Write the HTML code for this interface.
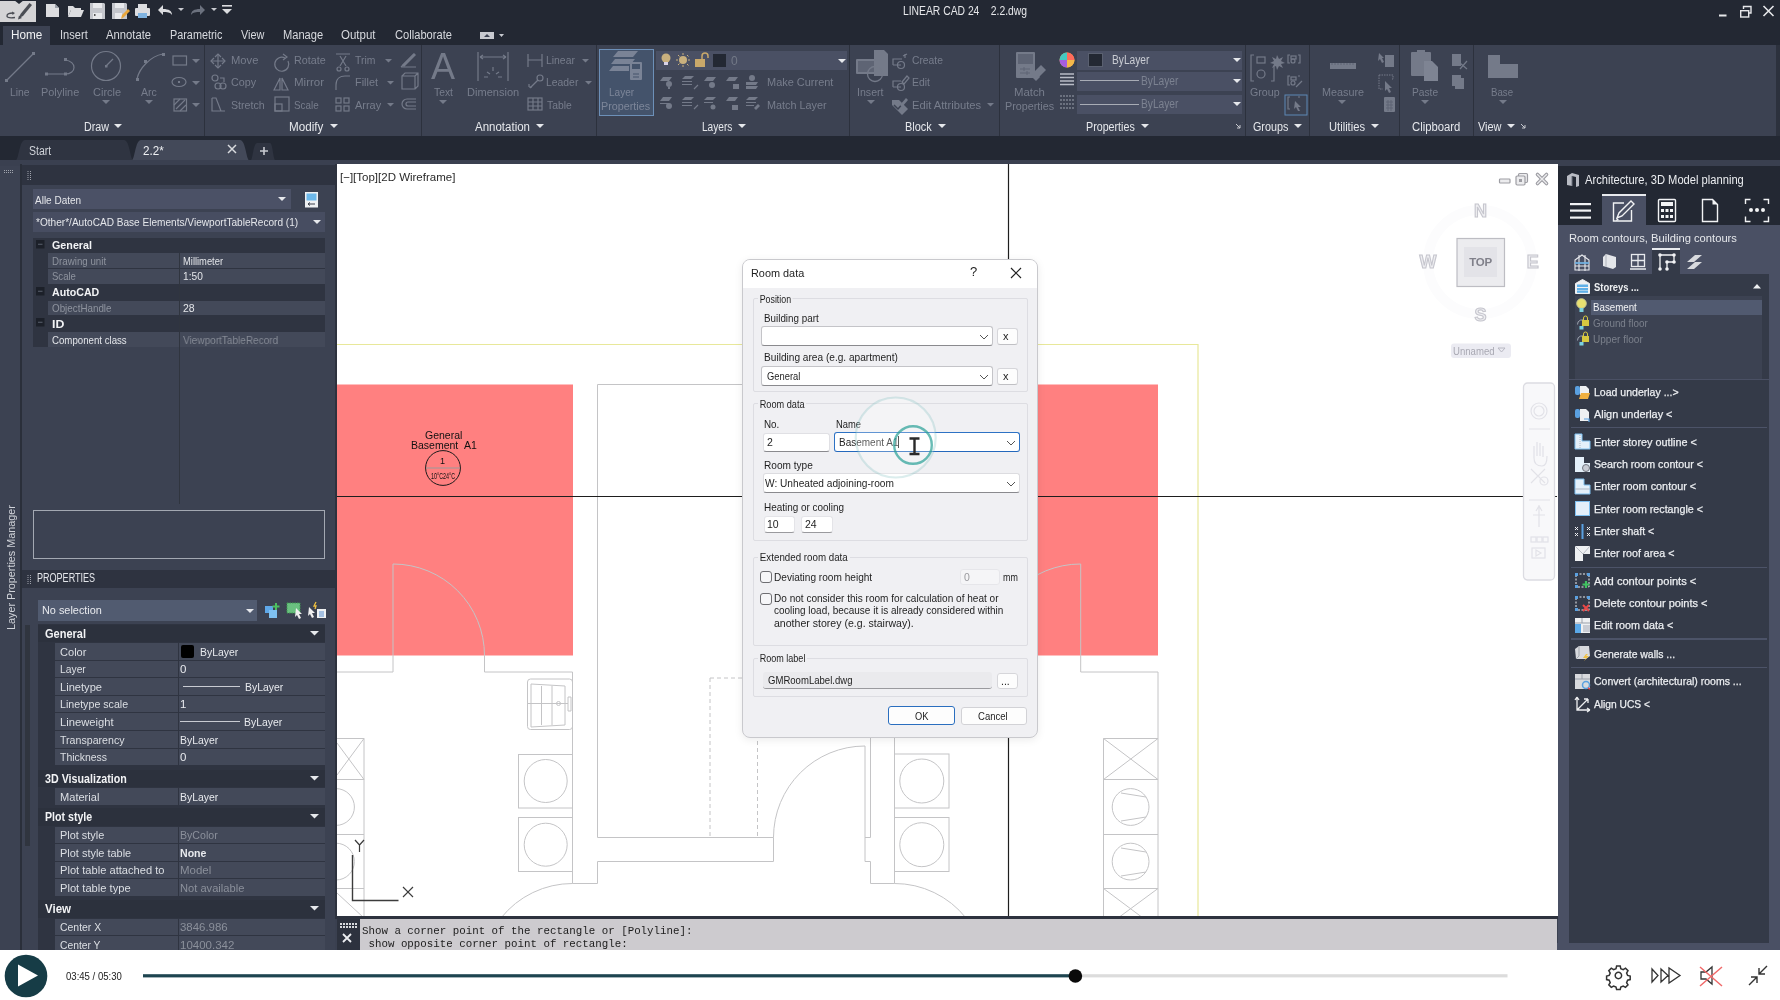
<!DOCTYPE html>
<html><head><meta charset="utf-8">
<style>
*{margin:0;padding:0;box-sizing:border-box}
html,body{width:1780px;height:1000px;overflow:hidden;background:#3a4050;font-family:"Liberation Sans",sans-serif}
.a{position:absolute}
.t{position:absolute;white-space:nowrap;line-height:14px;font-size:12px}
svg{position:absolute;overflow:visible}
#title{left:0;top:0;width:1780px;height:45px;background:#232833}
#ribbon{left:0;top:45px;width:1780px;height:91px;background:#3c4252}
#tabbar{left:0;top:136px;width:1780px;height:28px;background:#232833}
.rb{color:#777d8c}
.rl{color:#e6e8ec;font-size:12px}
.dis{stroke:#737989;fill:none;stroke-width:1.3}
.disf{fill:#737989}
</style></head><body>
<div style="position:absolute;left:0;top:0;width:1780px;height:1000px;overflow:hidden;will-change:transform">
<div id="title" class="a"></div>
<div id="ribbon" class="a"></div>
<div id="tabbar" class="a"></div>
<!-- app button -->
<div class="a" style="left:0;top:1px;width:36px;height:20.5px;background:#d4d4d6"></div>
<svg style="left:0;top:0" width="36" height="22"><path d="M14 0h10l-5 4z" fill="#232833"/>
<path d="M19 18l1.5-4 9-11 2.5 2-9 11z" fill="#4a4d54"/><path d="M18 19.5l1-4 3 2.5z" fill="#4a4d54"/>
<path d="M15 17.5c-4 .5-8 .5-8-1.5 0-2 3-3 6-3" stroke="#4a4d54" stroke-width="1.3" fill="none"/><path d="M12 11.5l3 1.5-2.5 2z" fill="#4a4d54"/></svg>
<!-- quick access icons -->
<svg style="left:45px;top:3px" width="16" height="15"><path d="M1 1h9l4 4v9H1z" fill="#dcdde0"/><path d="M10 1v4h4" fill="#9aa0aa"/></svg>
<svg style="left:67px;top:4px" width="17" height="14"><path d="M1 2h5l2 2h6v2H4L1 13z" fill="#dcdde0"/><path d="M4 6h13l-3 7H1z" fill="#dcdde0"/></svg>
<svg style="left:90px;top:3px" width="16" height="16"><path d="M0 0h14l1 1v15H0z" fill="#c4c6cc"/><rect x="3" y="0" width="9" height="5" fill="#e8e9ec"/><rect x="3" y="10" width="9" height="6" fill="#e8e9ec"/><rect x="4" y="11" width="1.5" height="2" fill="#555"/></svg>
<svg style="left:112px;top:3px" width="17" height="16"><path d="M0 0h14l1 1v15H0z" fill="#c4c6cc"/><rect x="3" y="0" width="9" height="5" fill="#e8e9ec"/><rect x="3" y="10" width="7" height="6" fill="#e8e9ec"/><path d="M9 16l1-4 6-6 2 2-6 6z" fill="#e8a53a"/></svg>
<svg style="left:134px;top:3px" width="17" height="16"><rect x="4" y="1" width="9" height="4" fill="#dcdde0"/><rect x="1" y="5" width="15" height="8" rx="1" fill="#dcdde0"/><rect x="4" y="10" width="9" height="5" fill="#7fb3e0"/></svg>
<svg style="left:157px;top:4px" width="16" height="12"><path d="M6 1L1 6l5 5V8c4 0 7 0 9 3 0-4-3-6-9-6z" fill="#dcdde0"/></svg>
<svg style="left:178px;top:8px" width="6" height="4"><path d="M0 0h6L3 3z" fill="#c8cad0"/></svg>
<svg style="left:190px;top:4px" width="16" height="12"><path d="M10 1l5 5-5 5V8C6 8 3 8 1 11c0-4 3-6 9-6z" fill="#6b717e"/></svg>
<svg style="left:211px;top:8px" width="6" height="4"><path d="M0 0h6L3 3z" fill="#c8cad0"/></svg>
<svg style="left:222px;top:5px" width="10" height="9"><rect x="0" y="0" width="10" height="1.6" fill="#dcdde0"/><path d="M0 4h10L5 9z" fill="#dcdde0"/></svg>
<span class="t" style="transform:scaleX(0.861);transform-origin:0 0;left:903px;top:4px;color:#e6e7ea;font-size:12px">LINEAR CAD 24&nbsp;&nbsp;&nbsp;&nbsp;2.2.dwg</span>
<!-- window controls -->
<svg style="left:1716px;top:5px" width="62" height="14"><rect x="3" y="9.5" width="7.5" height="2" fill="#e6e7ea"/><path d="M27.5 4V1.5h7.5v6.5h-2" stroke="#e6e7ea" stroke-width="1.4" fill="none"/><rect x="24.7" y="5.7" width="8" height="6.3" stroke="#e6e7ea" stroke-width="1.4" fill="none"/><path d="M47.5 1l10 10M57.5 1l-10 10" stroke="#e6e7ea" stroke-width="1.6"/></svg>
<!-- ribbon tabs -->
<div class="a" style="left:3px;top:26px;width:47px;height:19px;background:#3c4252"></div>
<span class="t" style="transform:scaleX(0.939);transform-origin:0 0;left:11px;top:28px;color:#f0f1f3;font-size:12.5px">Home</span>
<span class="t" style="transform:scaleX(0.887);transform-origin:0 0;left:60px;top:28px;color:#d8dadf;font-size:12.5px">Insert</span>
<span class="t" style="transform:scaleX(0.900);transform-origin:0 0;left:106px;top:28px;color:#d8dadf;font-size:12.5px">Annotate</span>
<span class="t" style="transform:scaleX(0.867);transform-origin:0 0;left:170px;top:28px;color:#d8dadf;font-size:12.5px">Parametric</span>
<span class="t" style="transform:scaleX(0.870);transform-origin:0 0;left:241px;top:28px;color:#d8dadf;font-size:12.5px">View</span>
<span class="t" style="transform:scaleX(0.889);transform-origin:0 0;left:283px;top:28px;color:#d8dadf;font-size:12.5px">Manage</span>
<span class="t" style="transform:scaleX(0.921);transform-origin:0 0;left:341px;top:28px;color:#d8dadf;font-size:12.5px">Output</span>
<span class="t" style="transform:scaleX(0.891);transform-origin:0 0;left:395px;top:28px;color:#d8dadf;font-size:12.5px">Collaborate</span>
<svg style="left:480px;top:31px" width="26" height="9"><rect x="0" y="1" width="14" height="7" fill="#c8cad0"/><path d="M4 6h6L7 3z" fill="#3c4252"/><path d="M19 3h5l-2.5 3z" fill="#c8cad0"/></svg>

<!-- separators -->
<div class="a" style="left:204px;top:45px;width:1px;height:91px;background:#2c313d"></div>
<div class="a" style="left:421px;top:45px;width:1px;height:91px;background:#2c313d"></div>
<div class="a" style="left:596px;top:45px;width:1px;height:91px;background:#2c313d"></div>
<div class="a" style="left:849px;top:45px;width:1px;height:91px;background:#2c313d"></div>
<div class="a" style="left:999px;top:45px;width:1px;height:91px;background:#2c313d"></div>
<div class="a" style="left:1245px;top:45px;width:1px;height:91px;background:#2c313d"></div>
<div class="a" style="left:1309px;top:45px;width:1px;height:91px;background:#2c313d"></div>
<div class="a" style="left:1399px;top:45px;width:1px;height:91px;background:#2c313d"></div>
<div class="a" style="left:1473px;top:45px;width:1px;height:91px;background:#2c313d"></div>
<div class="a" style="left:1776px;top:45px;width:4px;height:91px;background:#2c313d"></div>
<!-- panel labels -->
<span class="t rl" style="transform:scaleX(0.893);transform-origin:0 0;left:84px;top:120px">Draw</span>
<span class="t rl" style="transform:scaleX(0.971);transform-origin:0 0;left:289px;top:120px">Modify</span>
<span class="t rl" style="transform:scaleX(0.958);transform-origin:0 0;left:475px;top:120px">Annotation</span>
<span class="t rl" style="transform:scaleX(0.842);transform-origin:0 0;left:702px;top:120px">Layers</span>
<span class="t rl" style="transform:scaleX(0.910);transform-origin:0 0;left:905px;top:120px">Block</span>
<span class="t rl" style="transform:scaleX(0.891);transform-origin:0 0;left:1086px;top:120px">Properties</span>
<span class="t rl" style="transform:scaleX(0.897);transform-origin:0 0;left:1253px;top:120px">Groups</span>
<span class="t rl" style="transform:scaleX(0.931);transform-origin:0 0;left:1329px;top:120px">Utilities</span>
<span class="t rl" style="transform:scaleX(0.941);transform-origin:0 0;left:1412px;top:120px">Clipboard</span>
<span class="t rl" style="transform:scaleX(0.912);transform-origin:0 0;left:1478px;top:120px">View</span>
<svg style="left:0;top:122px" width="1540" height="10">
<g fill="#e6e8ec"><path d="M114 2h8l-4 4z"/><path d="M330 2h8l-4 4z"/><path d="M536 2h8l-4 4z"/><path d="M738 2h8l-4 4z"/><path d="M938 2h8l-4 4z"/><path d="M1141 2h8l-4 4z"/><path d="M1294 2h8l-4 4z"/><path d="M1371 2h8l-4 4z"/><path d="M1507 2h8l-4 4z"/></g>
<path d="M1236 2l4 4M1240 3v3h-3M1521 2l4 4M1525 3v3h-3" stroke="#c8cad0" stroke-width="1" fill="none"/>
</svg>
<!-- DRAW -->
<svg style="left:0;top:45px" width="205" height="75" class="rbsvg">
<g stroke="#747a89" fill="none" stroke-width="1.2">
<path d="M7 35L33 9"/>
<path d="M47 29h18M65 15c12 1 12 14 0 14"/>
<circle cx="106" cy="21" r="14.5"/><path d="M106 21l7-7"/>
<path d="M137 34C139 24 150 11 163 9"/>
<rect x="173" y="11" width="13.5" height="9"/>
<ellipse cx="179" cy="37" rx="7" ry="4.5"/>
<rect x="174" y="54" width="12.5" height="12"/><path d="M176 64l9-9M174 60l6-6M180 66l6-6"/>
</g>
<g fill="#747a89"><rect x="5" y="34" width="3" height="3"/><rect x="32" y="7" width="3" height="3"/><rect x="45" y="27.5" width="3" height="3"/><rect x="64" y="27.5" width="3" height="3"/><rect x="64" y="13" width="3" height="3"/><rect x="105" y="20" width="2.5" height="2.5"/><rect x="136" y="33" width="3" height="3"/><rect x="144" y="15" width="3" height="3"/><rect x="162" y="8" width="3" height="3"/><rect x="178" y="36" width="2" height="2"/>
<path d="M102 55h8l-4 4zM145 55h8l-4 4zM192 14h8l-4 4zM192 36h8l-4 4zM192 58h8l-4 4z"/></g>
</svg>
<span class="t rb" style="transform:scaleX(0.943);transform-origin:0 0;left:10px;top:85px;font-size:11px">Line</span>
<span class="t rb" style="transform:scaleX(0.992);transform-origin:0 0;left:41px;top:85px;font-size:11px">Polyline</span>
<span class="t rb" style="transform:scaleX(1.000);transform-origin:0 0;left:93px;top:85px;font-size:11px">Circle</span>
<span class="t rb" style="transform:scaleX(0.959);transform-origin:0 0;left:141px;top:85px;font-size:11px">Arc</span>
<!-- MODIFY -->
<svg style="left:205px;top:45px" width="216" height="75">
<g stroke="#747a89" fill="none" stroke-width="1.2">
<path d="M13 9v14M6 16h14"/><path d="M10 12l3-3 3 3M10 20l3 3 3-3M9 13l-3 3 3 3M17 13l3 3-3 3"/>
<circle cx="10" cy="33" r="3"/><circle cx="13" cy="41" r="3"/><circle cx="18" cy="41" r="3"/><path d="M15 33h4v4"/>
<path d="M7 53v13h13M7 53h4l5 13"/>
<path d="M80 13a7 7 0 1 0 3 3M78 9l4 3-4 3"/>
<path d="M69 45l6-12v12zM77 45v-12l6 12z"/>
<rect x="70" y="52" width="14" height="14"/><rect x="70" y="59" width="7" height="7"/>
<path d="M131 9h14M135 11l6 10M141 11l-6 10"/><circle cx="134" cy="24" r="2"/><circle cx="142" cy="24" r="2"/>
<path d="M131 45v-5c0-6 4-9 9-9h5"/>
<rect x="131" y="53" width="5" height="5"/><rect x="139" y="53" width="5" height="5"/><rect x="131" y="61" width="5" height="5"/><rect x="139" y="61" width="5" height="5"/>
<path d="M196 22l13-13M196 22h15"/>
<path d="M197 31h13v13h-13zM197 31l3-3h13v13l-3 3M210 31l3-3"/>
<path d="M211 54h-9a5 5 0 0 0 0 10h9M211 57h-8a2 2 0 0 0 0 4h8"/>
</g>
<g fill="#747a89"><path d="M180 14h7l-3.5 3.5zM182 36h7l-3.5 3.5zM182 58h7l-3.5 3.5z"/><path d="M197 20l12-12 2 2-12 12z"/></g>
</svg>
<span class="t rb" style="transform:scaleX(1.019);transform-origin:0 0;left:231px;top:53px;font-size:11px">Move</span>
<span class="t rb" style="transform:scaleX(0.977);transform-origin:0 0;left:231px;top:75px;font-size:11px">Copy</span>
<span class="t rb" style="transform:scaleX(0.969);transform-origin:0 0;left:231px;top:98px;font-size:11px">Stretch</span>
<span class="t rb" style="transform:scaleX(0.978);transform-origin:0 0;left:294px;top:53px;font-size:11px">Rotate</span>
<span class="t rb" style="transform:scaleX(1.048);transform-origin:0 0;left:294px;top:75px;font-size:11px">Mirror</span>
<span class="t rb" style="transform:scaleX(0.896);transform-origin:0 0;left:294px;top:98px;font-size:11px">Scale</span>
<span class="t rb" style="transform:scaleX(0.941);transform-origin:0 0;left:355px;top:53px;font-size:11px">Trim</span>
<span class="t rb" style="transform:scaleX(0.991);transform-origin:0 0;left:355px;top:75px;font-size:11px">Fillet</span>
<span class="t rb" style="transform:scaleX(0.996);transform-origin:0 0;left:355px;top:98px;font-size:11px">Array</span>
<!-- ANNOTATION -->
<span class="t rb" style="left:431px;top:49px;font-size:36px;line-height:36px;color:#747a89">A</span>
<svg style="left:422px;top:45px" width="175" height="75">
<g stroke="#747a89" fill="none" stroke-width="1.2">
<path d="M56 7v29M86 7v29M58 12h26M58 12l3-2M58 12l3 2M84 12l-3-2M84 12l-3 2"/>
<path d="M71 22v4M65 27l3 2M77 27l-3 2M62 32h4M80 32h-4"/>
<path d="M106 9v13M120 9v13M106 15h14"/>
<path d="M108 43l8-8"/><circle cx="118" cy="33" r="3"/><path d="M107 42v-3M107 42h3"/>
<rect x="106" y="53" width="14" height="12"/><path d="M106 57h14M106 61h14M111 53v12M116 53v12"/>
</g>
<g fill="#747a89"><path d="M17 55h8l-4 4z"/><path d="M160 14h7l-3.5 3.5zM163 36h7l-3.5 3.5z"/></g>
</svg>
<span class="t rb" style="transform:scaleX(0.940);transform-origin:0 0;left:434px;top:85px;font-size:11px">Text</span>
<span class="t rb" style="transform:scaleX(1.004);transform-origin:0 0;left:467px;top:85px;font-size:11px">Dimension</span>
<span class="t rb" style="transform:scaleX(0.945);transform-origin:0 0;left:546px;top:53px;font-size:11px">Linear</span>
<span class="t rb" style="transform:scaleX(0.944);transform-origin:0 0;left:546px;top:75px;font-size:11px">Leader</span>
<span class="t rb" style="transform:scaleX(0.938);transform-origin:0 0;left:547px;top:98px;font-size:11px">Table</span>
<!-- LAYERS -->
<div class="a" style="left:599px;top:49px;width:55px;height:67px;background:#44536b;border:1px solid #6d90b8"></div>
<svg style="left:599px;top:45px" width="55" height="40">
<g fill="#7a8396"><path d="M14 12l5-6h20l-5 6z"/><path d="M12 19l4-5h20l-4 5z"/><path d="M10 26l4-5h16v5z"/><rect x="31" y="17" width="12" height="18" rx="1"/></g>
<rect x="33" y="19" width="8" height="5" fill="#44536b"/><path d="M34 29h6M34 32h6" stroke="#44536b" stroke-width="1"/>
</svg>
<span class="t rb" style="transform:scaleX(0.911);transform-origin:0 0;left:609px;top:85px;font-size:11px;color:#7d8699">Layer</span>
<span class="t rb" style="transform:scaleX(0.980);transform-origin:0 0;left:601px;top:99px;font-size:11px;color:#7d8699">Properties</span>
<div class="a" style="left:656px;top:51px;width:191px;height:19px;background:#4a5064"></div>
<svg style="left:656px;top:51px" width="191" height="19">
<circle cx="10" cy="7" r="4.5" fill="#c9b07e"/><rect x="8" y="11" width="4" height="3" fill="#d8d2e8"/>
<circle cx="27" cy="9" r="4" fill="#c9b07e"/><path d="M27 2v2M27 14v2M20 9h2M32 9h2M22 4l1.5 1.5M31 13l1.5 1.5M22 14l1.5-1.5M31 4l1.5 1.5" stroke="#c9b07e" stroke-width="1"/>
<rect x="39" y="8" width="10" height="8" fill="#c9a86a"/><path d="M46 8V5a3 3 0 0 1 6 0v2" stroke="#c9a86a" stroke-width="1.5" fill="none"/>
<rect x="57" y="3" width="13" height="13" fill="#232833"/>
<path d="M182 8h8l-4 4z" fill="#e6e8ec"/>
</svg>
<span class="t" style="left:731px;top:54px;color:#737987;font-size:12px">0</span>
<svg style="left:656px;top:75px" width="110" height="42">
<g fill="#747a89">
<path d="M4 6l3-4h9l-3 4z"/><circle cx="13" cy="9" r="3"/><rect x="12" y="12" width="2" height="2"/>
<path d="M26 4l3-3h9l-3 3zM26 6.5h9M26 9h9" /><path d="M26 6h10v1H26zM26 9h10v1H26z"/>
<path d="M48 6l3-4h9l-3 4z"/><circle cx="56" cy="10" r="3"/>
<path d="M70 6l3-4h9l-3 4z"/><rect x="77" y="9" width="6" height="5"/>
<circle cx="96" cy="3" r="3"/><path d="M90 7h12l-2 3H90zM90 11h12l-2 3H90z"/>
<path d="M4 26l3-4h9l-3 4zM4 28h9v1H4z"/><circle cx="13" cy="31" r="3"/>
<path d="M26 25l3-3h9l-3 3zM26 27h10v1H26zM26 30h10v1H26z"/>
<path d="M48 25l3-3h9l-3 3zM48 27h9v1h-9z"/><circle cx="57" cy="32" r="2.5"/>
<path d="M70 26l3-4h9l-3 4z"/><rect x="76" y="30" width="6" height="5"/>
<path d="M90 25l3-3h9l-3 3zM90 27h10v1H90zM90 30h8v1h-8z"/><path d="M98 33l4-4 2 2-4 4z"/>
</g>
<path d="M38 14l4-4M38 34l4-4" stroke="#747a89" stroke-width="1.2"/>
</svg>
<span class="t rb" style="transform:scaleX(0.996);transform-origin:0 0;left:767px;top:75px;font-size:11px">Make Current</span>
<span class="t rb" style="transform:scaleX(0.984);transform-origin:0 0;left:767px;top:98px;font-size:11px">Match Layer</span>
<!-- BLOCK -->
<svg style="left:850px;top:45px" width="150" height="75">
<path d="M24 5h10l4 4v22H24z" fill="#747a89"/>
<rect x="6" y="14" width="20" height="15" rx="1" fill="#747a89"/>
<rect x="8" y="16" width="16" height="11" fill="#5e6474"/>
<circle cx="25" cy="29" r="7.5" stroke="#747a89" stroke-width="1.3" fill="none"/>
<g stroke="#747a89" fill="none" stroke-width="1.2">
<path d="M43 20v-6h9M43 20h8"/><circle cx="51" cy="20" r="3.5"/><path d="M53 11l4-2M55 9v4"/>
<path d="M43 42v-6h8M43 42h8"/><circle cx="51" cy="42" r="3.5"/><path d="M52 37l5-6 2 2-5 6z"/>
</g>
<path d="M42 55h7l9 9-6 6-10-10z" fill="#747a89"/><path d="M44 60l4 4 7-8" stroke="#3c4252" stroke-width="1.5" fill="none"/><path d="M50 60l6-7 2 2-6 7z" fill="#747a89"/>
<g fill="#747a89"><path d="M17 55h8l-4 4z"/><path d="M137 58h7l-3.5 3.5z"/></g>
</svg>
<span class="t rb" style="transform:scaleX(0.964);transform-origin:0 0;left:857px;top:85px;font-size:11px">Insert</span>
<span class="t rb" style="transform:scaleX(0.936);transform-origin:0 0;left:912px;top:53px;font-size:11px">Create</span>
<span class="t rb" style="transform:scaleX(0.942);transform-origin:0 0;left:912px;top:75px;font-size:11px">Edit</span>
<span class="t rb" style="transform:scaleX(1.018);transform-origin:0 0;left:912px;top:98px;font-size:11px">Edit Attributes</span>
<!-- PROPERTIES -->
<svg style="left:1000px;top:45px" width="245" height="75">
<g fill="#747a89"><rect x="16" y="7" width="19" height="26" rx="1"/><path d="M34 27l7-7 5 5-7 7z"/><path d="M31 31l4-4 5 5-4 4z"/></g>
<rect x="18" y="9" width="15" height="10" fill="#5e6474"/><path d="M20 24h10M20 28h10M24 22v4M27 26v4" stroke="#5e6474" stroke-width="1"/>
<g transform="translate(1067,60)"></g>
<circle cx="67" cy="15" r="7.5" fill="#e0a040"/>
<path d="M67 15V7.5A7.5 7.5 0 0 1 74.5 15z" fill="#ff6b5b"/><path d="M67 15h7.5A7.5 7.5 0 0 1 67 22.5z" fill="#f5b84a"/><path d="M67 15v7.5A7.5 7.5 0 0 1 59.5 15z" fill="#a65ee0"/><path d="M67 15h-7.5A7.5 7.5 0 0 1 67 7.5z" fill="#46c8c0"/>
<path d="M60 29h14M60 32.5h14M60 36h14M60 39.5h14" stroke="#b8bcc6" stroke-width="1.6"/>
<path d="M60 51h14M60 55h14M60 59h14M60 63h14" stroke="#9aa0ac" stroke-width="1.2" stroke-dasharray="2 1"/>
</svg>
<span class="t rb" style="transform:scaleX(1.033);transform-origin:0 0;left:1014px;top:85px;font-size:11px">Match</span>
<span class="t rb" style="transform:scaleX(0.980);transform-origin:0 0;left:1005px;top:99px;font-size:11px">Properties</span>
<div class="a" style="left:1077px;top:51px;width:165px;height:19px;background:#4a5064"></div>
<div class="a" style="left:1077px;top:72px;width:165px;height:19px;background:#4a5064"></div>
<div class="a" style="left:1077px;top:95px;width:165px;height:19px;background:#4a5064"></div>
<div class="a" style="left:1088px;top:53px;width:15px;height:14px;background:#232833;border:1px solid #5a6070"></div>
<span class="t" style="transform:scaleX(0.850);transform-origin:0 0;left:1112px;top:53px;color:#c9ccd3;font-size:12px">ByLayer</span>
<div class="a" style="left:1080px;top:80px;width:59px;height:1px;background:#a8acb5"></div>
<div class="a" style="left:1080px;top:104px;width:59px;height:1px;background:#a8acb5"></div>
<span class="t" style="transform:scaleX(0.850);transform-origin:0 0;left:1141px;top:74px;color:#7c8291;font-size:12px">ByLayer</span>
<span class="t" style="transform:scaleX(0.850);transform-origin:0 0;left:1141px;top:97px;color:#7c8291;font-size:12px">ByLayer</span>
<svg style="left:1232px;top:56px" width="10" height="55"><g fill="#e6e8ec"><path d="M1 2h8l-4 4z"/><path d="M1 23h8l-4 4z"/><path d="M1 46h8l-4 4z"/></g></svg>
<!-- GROUPS -->
<svg style="left:1246px;top:45px" width="63" height="75">
<g stroke="#747a89" fill="none" stroke-width="1.2">
<path d="M8 10H5v26h3M28 22v14h-3"/><rect x="11" y="12" width="8" height="6"/><circle cx="15" cy="29" r="4"/>
<path d="M44 10h-2v8h2M52 10h2v8h-2"/><rect x="45" y="11" width="5" height="3"/><circle cx="47" cy="16" r="2"/>
<path d="M44 31h-2v9h2M52 31h2"/><rect x="45" y="32" width="5" height="3"/><circle cx="47" cy="38" r="2"/><path d="M50 42l6-6"/>
<path d="M44 52h-2v12h2M52 52h2"/>
</g>
<path d="M31 10l2 4 4-2-2 4 4 2-4 1 2 4-4-2-2 4-1-4-4 2 2-4-4-1 4-2-2-4 4 2z" fill="#747a89"/>
<rect x="39" y="50" width="22" height="20" fill="none" stroke="#5d88b5" stroke-width="1"/>
<path d="M49 56l6 6h-3l2 4h-2l-2-4-2 2z" fill="#747a89"/>
</svg>
<span class="t rb" style="transform:scaleX(0.968);transform-origin:0 0;left:1250px;top:85px;font-size:11px">Group</span>
<!-- UTILITIES -->
<svg style="left:1310px;top:45px" width="90" height="75">
<rect x="20" y="18" width="26" height="6" fill="#747a89"/><path d="M22 18v2M25 18v2M28 18v2M31 18v2M34 18v2M37 18v2M40 18v2M43 18v2" stroke="#5e6474"/>
<path d="M28 55h8l-4 4z" fill="#747a89"/>
<g fill="#747a89"><path d="M69 8l5 5h-2l2 4-2 1-2-4-2 2z"/><rect x="75" y="10" width="9" height="12"/>
<path d="M69 30h14v4h-1M69 30v14h4" stroke="#747a89" fill="none" stroke-dasharray="1.5 1"/><path d="M75 36l7 7h-3l2 4-2 1-2-4-2 2z"/>
<rect x="74" y="52" width="11" height="15" rx="1"/></g>
<path d="M76 57h7M76 60h7M76 63h7M78 55v11M81 55v11" stroke="#5e6474"/>
</svg>
<span class="t rb" style="transform:scaleX(0.981);transform-origin:0 0;left:1322px;top:85px;font-size:11px">Measure</span>
<!-- CLIPBOARD -->
<svg style="left:1400px;top:45px" width="73" height="75">
<rect x="11" y="7" width="20" height="24" rx="1" fill="#747a89"/><rect x="17" y="5" width="8" height="4" fill="#747a89"/>
<path d="M24 16h8l6 6v14H24z" fill="#7e8493"/>
<path d="M21 55h8l-4 4z" fill="#747a89"/>
<g fill="#747a89"><rect x="52" y="9" width="9" height="12"/><rect x="55" y="33" width="9" height="11"/><rect x="52" y="30" width="9" height="11"/></g>
<path d="M60 18l7 6M67 16l-7 8" stroke="#747a89" stroke-width="1.2"/>
</svg>
<span class="t rb" style="transform:scaleX(0.929);transform-origin:0 0;left:1412px;top:85px;font-size:11px">Paste</span>
<!-- VIEW -->
<svg style="left:1474px;top:45px" width="60" height="75">
<path d="M14 10h12v9h18v14H14z" fill="#747a89"/>
<path d="M25 55h8l-4 4z" fill="#747a89"/>
</svg>
<span class="t rb" style="transform:scaleX(0.880);transform-origin:0 0;left:1491px;top:85px;font-size:11px">Base</span>

<!-- document tabs -->
<svg style="left:0;top:138px" width="290" height="24">
<path d="M15 23C19 23 19 2 25 2H124C130 2 130 23 134 23z" fill="#2f3441"/>
<path d="M131 23C135 23 135 2 141 2H240C246 2 246 23 250 23z" fill="#434959"/>
<path d="M250 23C253 23 253 5 257 5H270C273 5 273 23 276 23z" fill="#2f3441"/>
<path d="M264 9v8M260 13h8" stroke="#c8cad0" stroke-width="1.6"/>
<path d="M228 7l8 8M236 7l-8 8" stroke="#d8dade" stroke-width="1.5"/>
</svg>
<span class="t" style="transform:scaleX(0.876);transform-origin:0 0;left:29px;top:144px;color:#cfd2d8;font-size:12px">Start</span>
<span class="t" style="transform:scaleX(0.971);transform-origin:0 0;left:143px;top:144px;color:#eef0f3;font-size:12px">2.2*</span>
<!-- left strip -->
<div class="a" style="left:0;top:166px;width:20px;height:784px;background:#3c4252"></div>
<div class="a" style="left:20px;top:164px;width:2px;height:786px;background:#2a2f3a"></div>
<svg style="left:4px;top:170px" width="10" height="5"><path d="M0.5 0v4M2.5 0v4M4.5 0v4M6.5 0v4M8.5 0v4" stroke="#a0a4ad" stroke-width="1" stroke-dasharray="1 1"/></svg>
<span class="t" style="left:-51px;top:561px;width:124px;color:#d0d3d9;font-size:12px;transform:rotate(-90deg);transform-origin:62px 7px;text-align:center;font-size:10.8px">Layer Properties Manager</span>
<!-- left upper panel -->
<div class="a" style="left:22px;top:165px;width:313px;height:405px;background:#3c4252"></div>
<div class="a" style="left:22px;top:165px;width:313px;height:20px;background:#2e3340"></div>
<svg style="left:27px;top:171px" width="5" height="10"><path d="M1 0v10M3.5 0v10" stroke="#a0a4ad" stroke-width="1" stroke-dasharray="1 1"/></svg>
<div class="a" style="left:33px;top:189px;width:258px;height:20px;background:#4b5166"></div>
<span class="t" style="transform:scaleX(0.908);transform-origin:0 0;left:35px;top:193px;color:#e4e6ea;font-size:11px">Alle Daten</span>
<svg style="left:278px;top:197px" width="8" height="5"><path d="M0 0h8L4 4z" fill="#e6e8ec"/></svg>
<svg style="left:305px;top:192px" width="13" height="16"><rect x="0" y="0" width="13" height="15.5" fill="#eef0f2"/><rect x="1.5" y="1.5" width="10" height="7" fill="#6cb8ea"/><path d="M3 12h7M3 12l2-1.5M3 12l2 1.5" stroke="#3a3f4a" stroke-width="1"/></svg>
<div class="a" style="left:33px;top:212px;width:292px;height:20px;background:#474d61"></div>
<span class="t" style="transform:scaleX(0.917);transform-origin:0 0;left:36px;top:215px;color:#e4e6ea;font-size:11px">*Other*/AutoCAD Base Elements/ViewportTableRecord (1)</span>
<svg style="left:313px;top:220px" width="8" height="5"><path d="M0 0h8L4 4z" fill="#e6e8ec"/></svg>
<!-- upper grid -->
<div class="a" style="left:33px;top:238px;width:292px;height:109px;background:#2f3441"></div>
<div class="a" style="left:48px;top:253px;width:277px;height:15px;background:#434959"></div>
<div class="a" style="left:48px;top:269px;width:277px;height:15px;background:#434959"></div>
<div class="a" style="left:48px;top:301px;width:277px;height:14px;background:#434959"></div>
<div class="a" style="left:48px;top:332px;width:277px;height:15px;background:#434959"></div>
<div class="a" style="left:179px;top:253px;width:1px;height:251px;background:#30353f"></div>
<svg style="left:36px;top:240px" width="9" height="92"><g><rect x="0" y="0" width="8.5" height="8.5" fill="#1c2029"/><rect x="0" y="47" width="8.5" height="8.5" fill="#1c2029"/><rect x="0" y="78" width="8.5" height="8.5" fill="#1c2029"/></g><path d="M2 4.25h4.5M2 51.25h4.5M2 82.25h4.5" stroke="#5a606e" stroke-width="1"/></svg>
<span class="t" style="transform:scaleX(0.976);transform-origin:0 0;left:52px;top:238px;color:#f2f3f5;font-size:11px;font-weight:bold">General</span>
<span class="t" style="transform:scaleX(0.885);transform-origin:0 0;left:52px;top:254px;color:#8e939e;font-size:11px">Drawing unit</span>
<span class="t" style="transform:scaleX(0.851);transform-origin:0 0;left:183px;top:254px;color:#e4e6ea;font-size:11px">Millimeter</span>
<span class="t" style="transform:scaleX(0.868);transform-origin:0 0;left:52px;top:269px;color:#8e939e;font-size:11px">Scale</span>
<span class="t" style="transform:scaleX(0.924);transform-origin:0 0;left:183px;top:269px;color:#e4e6ea;font-size:11px">1:50</span>
<span class="t" style="transform:scaleX(0.967);transform-origin:0 0;left:52px;top:285px;color:#f2f3f5;font-size:11px;font-weight:bold">AutoCAD</span>
<span class="t" style="transform:scaleX(0.893);transform-origin:0 0;left:52px;top:301px;color:#8e939e;font-size:11px">ObjectHandle</span>
<span class="t" style="transform:scaleX(0.950);transform-origin:0 0;left:183px;top:301px;color:#e4e6ea;font-size:11px">28</span>
<span class="t" style="transform:scaleX(1.118);transform-origin:0 0;left:52px;top:317px;color:#f2f3f5;font-size:11px;font-weight:bold">ID</span>
<span class="t" style="transform:scaleX(0.879);transform-origin:0 0;left:52px;top:333px;color:#e4e6ea;font-size:11px">Component class</span>
<span class="t" style="transform:scaleX(0.912);transform-origin:0 0;left:183px;top:333px;color:#858a95;font-size:11px">ViewportTableRecord</span>
<div class="a" style="left:33px;top:510px;width:292px;height:49px;border:1px solid #a3a8b2"></div>
<!-- PROPERTIES panel -->
<div class="a" style="left:22px;top:570px;width:313px;height:380px;background:#3c4252"></div>
<div class="a" style="left:22px;top:570px;width:313px;height:18px;background:#2e3340"></div>
<svg style="left:27px;top:575px" width="5" height="10"><path d="M1 0v10M3.5 0v10" stroke="#a0a4ad" stroke-width="1" stroke-dasharray="1 1"/></svg>
<span class="t" style="transform:scaleX(0.753);transform-origin:0 0;left:37px;top:571px;color:#e4e6ea;font-size:12px">PROPERTIES</span>
<div class="a" style="left:38px;top:600px;width:219px;height:21px;background:#515b70"></div>
<span class="t" style="transform:scaleX(0.989);transform-origin:0 0;left:42px;top:603px;color:#e8eaee;font-size:11px">No selection</span>
<svg style="left:246px;top:609px" width="8" height="5"><path d="M0 0h8L4 4z" fill="#e6e8ec"/></svg>
<svg style="left:265px;top:602px" width="62" height="17">
<rect x="0" y="4" width="8" height="7" fill="#5fa8e8"/><rect x="4" y="8" width="8" height="8" fill="#7ec0f0"/><path d="M11 1v7M7.5 4.5h7" stroke="#4cc060" stroke-width="2"/>
<rect x="22" y="1" width="13" height="10" fill="#6ac080" stroke="#3e9a50" stroke-dasharray="1.5 1"/><path d="M31 6l6 6h-3l2 4-2 1-2-4-2 2z" fill="#f0f0f0"/>
<path d="M44 5l6 6h-3l2 4-2 1-2-4-2 2z" fill="#f0f0f0"/><rect x="52" y="7" width="9" height="9" fill="#eef0f2"/><path d="M54 10h5M54 12h5M54 14h5" stroke="#5a8fd0"/><path d="M51 0l-2 4h2l-1 3" stroke="#f0c040" stroke-width="1.3" fill="none"/>
</svg>
<div class="a" style="left:25px;top:625px;width:5px;height:221px;background:#30353f"></div>

<div class="a" style="left:38px;top:624px;width:287px;height:326px;background:#2f3441"></div>
<div class="a" style="left:38px;top:624.5px;width:287px;height:17.5px;background:#2c313d"></div>
<span class="t" style="transform:scaleX(0.916);transform-origin:0 0;left:45px;top:626.5px;color:#f2f3f5;font-size:12px;font-weight:bold">General</span>
<svg style="left:310px;top:630.5px" width="9" height="5"><path d="M0 0h9L4.5 4.5z" fill="#e6e8ec"/></svg>
<div class="a" style="left:55px;top:643.0px;width:123px;height:16.6px;background:#434959"></div>
<div class="a" style="left:179px;top:643.0px;width:146px;height:16.6px;background:#434959"></div>
<span class="t" style="transform:scaleX(0.963);transform-origin:0 0;left:60px;top:644.5px;color:#dcdfe4;font-size:11.5px">Color</span>
<div class="a" style="left:181px;top:645.0px;width:13px;height:13px;background:#000;border-radius:2px"></div>
<span class="t" style="transform:scaleX(0.905);transform-origin:0 0;left:200px;top:644.5px;color:#e8eaee;font-size:11.5px;">ByLayer</span>
<div class="a" style="left:55px;top:660.6px;width:123px;height:16.6px;background:#434959"></div>
<div class="a" style="left:179px;top:660.6px;width:146px;height:16.6px;background:#434959"></div>
<span class="t" style="transform:scaleX(0.897);transform-origin:0 0;left:60px;top:662.1px;color:#dcdfe4;font-size:11.5px">Layer</span>
<span class="t" style="left:180px;top:662.1px;color:#e8eaee;font-size:11.5px;">0</span>
<div class="a" style="left:55px;top:678.2px;width:123px;height:16.6px;background:#434959"></div>
<div class="a" style="left:179px;top:678.2px;width:146px;height:16.6px;background:#434959"></div>
<span class="t" style="transform:scaleX(0.967);transform-origin:0 0;left:60px;top:679.7px;color:#dcdfe4;font-size:11.5px">Linetype</span>
<div class="a" style="left:183px;top:686.2px;width:57px;height:1px;background:#c8cbd2"></div>
<span class="t" style="transform:scaleX(0.905);transform-origin:0 0;left:245px;top:679.7px;color:#e8eaee;font-size:11.5px;">ByLayer</span>
<div class="a" style="left:55px;top:695.8px;width:123px;height:16.6px;background:#434959"></div>
<div class="a" style="left:179px;top:695.8px;width:146px;height:16.6px;background:#434959"></div>
<span class="t" style="transform:scaleX(0.927);transform-origin:0 0;left:60px;top:697.3px;color:#dcdfe4;font-size:11.5px">Linetype scale</span>
<span class="t" style="left:180px;top:697.3px;color:#e8eaee;font-size:11.5px;">1</span>
<div class="a" style="left:55px;top:713.4px;width:123px;height:16.6px;background:#434959"></div>
<div class="a" style="left:179px;top:713.4px;width:146px;height:16.6px;background:#434959"></div>
<span class="t" style="transform:scaleX(0.975);transform-origin:0 0;left:60px;top:714.9px;color:#dcdfe4;font-size:11.5px">Lineweight</span>
<div class="a" style="left:180px;top:721.4px;width:60px;height:1px;background:#c8cbd2"></div>
<span class="t" style="transform:scaleX(0.905);transform-origin:0 0;left:244px;top:714.9px;color:#e8eaee;font-size:11.5px;">ByLayer</span>
<div class="a" style="left:55px;top:731.0px;width:123px;height:16.6px;background:#434959"></div>
<div class="a" style="left:179px;top:731.0px;width:146px;height:16.6px;background:#434959"></div>
<span class="t" style="transform:scaleX(0.923);transform-origin:0 0;left:60px;top:732.5px;color:#dcdfe4;font-size:11.5px">Transparency</span>
<span class="t" style="transform:scaleX(0.905);transform-origin:0 0;left:180px;top:732.5px;color:#e8eaee;font-size:11.5px;">ByLayer</span>
<div class="a" style="left:55px;top:748.6px;width:123px;height:16.6px;background:#434959"></div>
<div class="a" style="left:179px;top:748.6px;width:146px;height:16.6px;background:#434959"></div>
<span class="t" style="transform:scaleX(0.908);transform-origin:0 0;left:60px;top:750.1px;color:#dcdfe4;font-size:11.5px">Thickness</span>
<span class="t" style="left:180px;top:750.1px;color:#e8eaee;font-size:11.5px;">0</span>
<div class="a" style="left:38px;top:769.5px;width:287px;height:17.5px;background:#2c313d"></div>
<span class="t" style="transform:scaleX(0.891);transform-origin:0 0;left:45px;top:771.5px;color:#f2f3f5;font-size:12px;font-weight:bold">3D Visualization</span>
<svg style="left:310px;top:775.5px" width="9" height="5"><path d="M0 0h9L4.5 4.5z" fill="#e6e8ec"/></svg>
<div class="a" style="left:55px;top:788.0px;width:123px;height:16.6px;background:#434959"></div>
<div class="a" style="left:179px;top:788.0px;width:146px;height:16.6px;background:#434959"></div>
<span class="t" style="transform:scaleX(0.963);transform-origin:0 0;left:60px;top:789.5px;color:#dcdfe4;font-size:11.5px">Material</span>
<span class="t" style="transform:scaleX(0.905);transform-origin:0 0;left:180px;top:789.5px;color:#e8eaee;font-size:11.5px;">ByLayer</span>
<div class="a" style="left:38px;top:808.0px;width:287px;height:17.5px;background:#2c313d"></div>
<span class="t" style="transform:scaleX(0.885);transform-origin:0 0;left:45px;top:810.0px;color:#f2f3f5;font-size:12px;font-weight:bold">Plot style</span>
<svg style="left:310px;top:814.0px" width="9" height="5"><path d="M0 0h9L4.5 4.5z" fill="#e6e8ec"/></svg>
<div class="a" style="left:55px;top:826.5px;width:123px;height:16.6px;background:#434959"></div>
<div class="a" style="left:179px;top:826.5px;width:146px;height:16.6px;background:#434959"></div>
<span class="t" style="transform:scaleX(0.947);transform-origin:0 0;left:60px;top:828.0px;color:#dcdfe4;font-size:11.5px">Plot style</span>
<span class="t" style="transform:scaleX(0.922);transform-origin:0 0;left:180px;top:828.0px;color:#8b909b;font-size:11.5px;">ByColor</span>
<div class="a" style="left:55px;top:844.1px;width:123px;height:16.6px;background:#434959"></div>
<div class="a" style="left:179px;top:844.1px;width:146px;height:16.6px;background:#434959"></div>
<span class="t" style="transform:scaleX(0.952);transform-origin:0 0;left:60px;top:845.6px;color:#dcdfe4;font-size:11.5px">Plot style table</span>
<span class="t" style="transform:scaleX(0.921);transform-origin:0 0;left:180px;top:845.6px;color:#e8eaee;font-size:11.5px;font-weight:bold;">None</span>
<div class="a" style="left:55px;top:861.7px;width:123px;height:16.6px;background:#434959"></div>
<div class="a" style="left:179px;top:861.7px;width:146px;height:16.6px;background:#434959"></div>
<span class="t" style="transform:scaleX(0.967);transform-origin:0 0;left:60px;top:863.2px;color:#dcdfe4;font-size:11.5px">Plot table attached to</span>
<span class="t" style="transform:scaleX(0.997);transform-origin:0 0;left:180px;top:863.2px;color:#8b909b;font-size:11.5px;">Model</span>
<div class="a" style="left:55px;top:879.3px;width:123px;height:16.6px;background:#434959"></div>
<div class="a" style="left:179px;top:879.3px;width:146px;height:16.6px;background:#434959"></div>
<span class="t" style="transform:scaleX(0.970);transform-origin:0 0;left:60px;top:880.8px;color:#dcdfe4;font-size:11.5px">Plot table type</span>
<span class="t" style="transform:scaleX(0.968);transform-origin:0 0;left:180px;top:880.8px;color:#8b909b;font-size:11.5px;">Not available</span>
<div class="a" style="left:38px;top:900.0px;width:287px;height:17.5px;background:#2c313d"></div>
<span class="t" style="transform:scaleX(0.959);transform-origin:0 0;left:45px;top:902.0px;color:#f2f3f5;font-size:12px;font-weight:bold">View</span>
<svg style="left:310px;top:906.0px" width="9" height="5"><path d="M0 0h9L4.5 4.5z" fill="#e6e8ec"/></svg>
<div class="a" style="left:55px;top:918.5px;width:123px;height:16.6px;background:#434959"></div>
<div class="a" style="left:179px;top:918.5px;width:146px;height:16.6px;background:#434959"></div>
<span class="t" style="transform:scaleX(0.907);transform-origin:0 0;left:60px;top:920.0px;color:#dcdfe4;font-size:11.5px">Center X</span>
<span class="t" style="transform:scaleX(0.994);transform-origin:0 0;left:180px;top:920.0px;color:#8b909b;font-size:11.5px;">3846.986</span>
<div class="a" style="left:55px;top:936.1px;width:123px;height:16.6px;background:#434959"></div>
<div class="a" style="left:179px;top:936.1px;width:146px;height:16.6px;background:#434959"></div>
<span class="t" style="transform:scaleX(0.896);transform-origin:0 0;left:60px;top:937.6px;color:#dcdfe4;font-size:11.5px">Center Y</span>
<span class="t" style="transform:scaleX(1.000);transform-origin:0 0;left:180px;top:937.6px;color:#8b909b;font-size:11.5px;">10400.342</span>

<!-- drawing area -->
<div class="a" style="left:335px;top:163px;width:1223px;height:755px;background:#fff;overflow:hidden"></div>
<svg style="left:0;top:0" width="1780" height="1000">
<defs><clipPath id="dc"><rect x="337" y="164" width="1221" height="752"/></clipPath></defs><g clip-path="url(#dc)">
<g>
<rect x="337" y="384.5" width="236" height="271" fill="#ff8080"/>
<rect x="1037" y="384.5" width="121" height="271" fill="#ff8080"/>
</g>
<g stroke="#e8e89a" stroke-width="1.2" fill="none"><path d="M337 344.5H1198V918"/></g>
<g stroke="#c4c4c6" stroke-width="1" fill="none">
<path d="M597.5 384.5H1037M597.5 384.5V837.5H773.5V861.5H597.5V883.5H572.5V672H484.5V655.5"/>
<path d="M393 655.5V564A91.5 91.5 0 0 1 484.5 655.5"/>
<path d="M337 672H393V655.5"/>
<path d="M710 678H743M710 678V837.5M757.5 678V837.5" stroke-dasharray="4 3"/>
<path d="M773.5 837.5A91.5 91.5 0 0 1 865 746V861.5H870.5V883.5H894.5V737M870.5 737V837.5H865"/>
<path d="M894.5 883.5A91.5 91.5 0 0 1 966 918"/>
<path d="M572.5 883.5A91.5 91.5 0 0 0 501 918"/>
<rect x="894.5" y="754" width="54.5" height="54"/><rect x="894.5" y="817.5" width="54.5" height="54"/>
<circle cx="921.8" cy="781" r="22"/><circle cx="921.8" cy="844.7" r="22"/>
<rect x="518.5" y="754.5" width="54" height="53.5"/><rect x="518.5" y="817.5" width="54" height="54"/>
<circle cx="545.7" cy="781" r="21.5"/><circle cx="545.7" cy="844.7" r="21.5"/>
<rect x="527.5" y="679" width="45" height="50.5" rx="3"/>
<path d="M531 684l34 2v39l-34 2z"/><path d="M527.5 703.5H568M541.5 686v39M552 686v39"/><circle cx="558.5" cy="703.5" r="2"/><path d="M568 697v14h3v-14z"/>
<path d="M1080.7 655.5V564A91.5 91.5 0 0 0 989 655.5"/>
<path d="M1080.7 655.5V672H1158V918M1103.5 738.5V918M1103.5 738.5H1158M1103.5 779.5H1158M1103.5 834.5H1158M1103.5 888.5H1158M1103.5 738.5L1158 779.5M1158 738.5L1103.5 779.5M1103.5 888.5L1143 918M1158 888.5L1118 918"/>
<circle cx="1130.6" cy="807" r="18.4"/><circle cx="1130.6" cy="861.6" r="18.4"/>
<path d="M1121 793l25 4M1121 821l25-4M1121 848l25 4M1121 876l25-4"/>
<path d="M337 738.5H364V918M337 779.5H364M337 834.5H364M337 888.5H364M337 743L364 779.5M337 775L364 738.5M337 893L364 918"/>
<circle cx="336" cy="807" r="18.4"/><circle cx="336" cy="861.6" r="18.4"/>
</g>
<g stroke="#1e1e1e" stroke-width="1.2" fill="none"><path d="M337 496.5H1557M1008.5 163V918"/></g>
<g stroke="#1a1a1a" stroke-width="1" fill="none"><circle cx="443" cy="468" r="17.4"/></g>
<path d="M426 468H460" stroke="#9a9a9a" stroke-width="1"/>
</g>
<g stroke="#3c3c3c" stroke-width="1.4" fill="none"><path d="M352.5 855V900.5H398.5"/><path d="M355 840l4.5 5 4.5-5M359.5 845v7M403 887l10 10M413 887l-10 10" stroke-width="1.2"/></g>
</svg>
<span class="t" style="transform:scaleX(1.000);transform-origin:0 0;left:425px;top:429px;color:#111;font-size:10.5px;line-height:12px">General</span>
<span class="t" style="transform:scaleX(1.000);transform-origin:0 0;left:411px;top:439px;color:#111;font-size:10.5px;line-height:12px">Basement&nbsp;&nbsp;A1</span>
<span class="t" style="left:440px;top:456px;color:#111;font-size:9px;line-height:10px">1</span>
<span class="t" style="transform:scaleX(0.600);transform-origin:0 0;left:431px;top:471px;color:#111;font-size:9px;line-height:10px">10°C24°C</span>
<span class="t" style="transform:scaleX(1.000);transform-origin:0 0;left:340px;top:170px;color:#2a2a2a;font-size:11.5px">[−][Top][2D Wireframe]</span>
<!-- viewport controls -->
<svg style="left:1497px;top:171px" width="52" height="15">
<rect x="2.5" y="8" width="10.5" height="4" rx="0.8" fill="#ececee" stroke="#9d9da3" stroke-width="1.2"/>
<rect x="21.5" y="2.5" width="9" height="9" rx="1.2" fill="#ececee" stroke="#9d9da3" stroke-width="1.2"/>
<rect x="19" y="5" width="9" height="9" rx="1.2" fill="#ececee" stroke="#9d9da3" stroke-width="1.2"/>
<rect x="22" y="8" width="3" height="3" fill="#9d9da3"/>
<path d="M40.5 3.5l9 9M49.5 3.5l-9 9" stroke="#9d9da3" stroke-width="3.6" stroke-linecap="round"/>
<path d="M40.5 3.5l9 9M49.5 3.5l-9 9" stroke="#ececee" stroke-width="1.4" stroke-linecap="round"/>
</svg>
<!-- view cube -->
<svg style="left:1400px;top:195px" width="150" height="170">
<circle cx="80" cy="67" r="52" fill="none" stroke="#fcfcfd" stroke-width="10"/>
<rect x="57" y="43.5" width="47.5" height="48" fill="#ececef" stroke="#bdbdc3" stroke-width="1.2"/>
<rect x="64" y="52" width="33" height="30" fill="#e3e3e8"/>
<rect x="51" y="148.5" width="60" height="14.5" rx="3" fill="#ebebf2"/>
<path d="M98 153h7l-3.5 4z" fill="none" stroke="#b8b8c2" stroke-width="1"/>
</svg>
<span class="t" style="left:1480.5px;top:255px;width:0;color:#80808a;font-size:11.5px;font-weight:bold;letter-spacing:-0.3px"><span style="position:absolute;left:-12px;width:24px;text-align:center">TOP</span></span>
<span class="t" style="left:1480.5px;top:202px;width:0;font-size:18px;line-height:18px;font-weight:bold"><span style="position:absolute;left:-15px;width:30px;text-align:center;color:#eeeef1;-webkit-text-stroke:1.1px #c6c6ce">N</span></span>
<span class="t" style="left:1428px;top:253px;width:0;font-size:18px;line-height:18px;font-weight:bold"><span style="position:absolute;left:-15px;width:30px;text-align:center;color:#eeeef1;-webkit-text-stroke:1.1px #c6c6ce">W</span></span>
<span class="t" style="left:1532.8px;top:253px;width:0;font-size:18px;line-height:18px;font-weight:bold"><span style="position:absolute;left:-15px;width:30px;text-align:center;color:#eeeef1;-webkit-text-stroke:1.1px #c6c6ce">E</span></span>
<span class="t" style="left:1480.5px;top:306px;width:0;font-size:18px;line-height:18px;font-weight:bold"><span style="position:absolute;left:-15px;width:30px;text-align:center;color:#eeeef1;-webkit-text-stroke:1.1px #c6c6ce">S</span></span>
<span class="t" style="transform:scaleX(0.913);transform-origin:0 0;left:1453px;top:344px;color:#a8a8b2;font-size:10.5px">Unnamed</span>
<!-- nav bar -->
<svg style="left:1522px;top:382px" width="34" height="200">
<rect x="1.5" y="1" width="31" height="197" rx="4" fill="#f8f8fa" stroke="#dcdce2" stroke-width="1.3"/>
<g stroke="#e2e2e8" stroke-width="1.2" fill="none">
<circle cx="17" cy="29" r="8"/><circle cx="17" cy="29" r="5"/>
<path d="M7 47H28M7 118H28"/>
<path d="M12 76v-12M15 74v-14M18 74v-13M21 75v-11M12 76c0 6 4 8 8 8s5-4 5-10"/>
<path d="M9 87l14 14M23 87l-14 14"/><circle cx="22" cy="99" r="4"/>
<path d="M17 123v22M11 133h12M14 129l3-5 3 5"/>
<rect x="9" y="155" width="5" height="5"/><rect x="15" y="155" width="5" height="5"/><rect x="21" y="155" width="5" height="5"/>
<rect x="10" y="166" width="13" height="10"/><path d="M14 168l5 3-5 3z"/>
</g>
</svg>

<!-- dialog -->
<div class="a" style="left:742px;top:259px;width:295.5px;height:478.5px;background:#f0f0f3;border:1px solid #c9c9cd;border-radius:8px;box-shadow:0 2px 8px rgba(0,0,0,0.08);overflow:hidden">
 <div class="a" style="left:0;top:0;width:294px;height:28px;background:#ffffff"></div>
</div>
<span class="t" style="transform:scaleX(0.946);transform-origin:0 0;left:751px;top:266px;color:#1e1e1e;font-size:11.5px">Room data</span>
<span class="t" style="left:970px;top:265px;color:#222;font-size:13px">?</span>
<svg style="left:1010px;top:267px" width="12" height="12"><path d="M1 1l10 10M11 1L1 11" stroke="#222" stroke-width="1.2"/></svg>
<!-- group boxes -->
<div class="a" style="left:753px;top:298px;width:275px;height:93.5px;border:1px solid #dddde2;border-radius:2px"></div>
<div class="a" style="left:753px;top:403px;width:275px;height:138px;border:1px solid #dddde2;border-radius:2px"></div>
<div class="a" style="left:753px;top:556.5px;width:275px;height:89px;border:1px solid #dddde2;border-radius:2px"></div>
<div class="a" style="left:753px;top:657.5px;width:275px;height:39px;border:1px solid #dddde2;border-radius:2px"></div>
<span class="t" style="transform:scaleX(0.841);transform-origin:0 0;left:758px;top:292px;padding:0 2px;background:#f0f0f3;color:#1e1e1e;font-size:10.5px">Position</span>
<span class="t" style="transform:scaleX(0.873);transform-origin:0 0;left:758px;top:397px;padding:0 2px;background:#f0f0f3;color:#1e1e1e;font-size:10.5px">Room data</span>
<span class="t" style="transform:scaleX(0.929);transform-origin:0 0;left:758px;top:550px;padding:0 2px;background:#f0f0f3;color:#1e1e1e;font-size:10.5px">Extended room data</span>
<span class="t" style="transform:scaleX(0.860);transform-origin:0 0;left:758px;top:651px;padding:0 2px;background:#f0f0f3;color:#1e1e1e;font-size:10.5px">Room label</span>
<span class="t" style="transform:scaleX(0.936);transform-origin:0 0;left:764px;top:311px;color:#1e1e1e;font-size:10.5px">Building part</span>
<span class="t" style="transform:scaleX(0.964);transform-origin:0 0;left:764px;top:350px;color:#1e1e1e;font-size:10.5px">Building area (e.g. apartment)</span>
<!-- combos -->
<div class="a" style="left:761px;top:326px;width:231.5px;height:19.5px;background:#fff;border:1px solid #c4c4c8;border-bottom:1.5px solid #8a8a8e;border-radius:3px"></div>
<div class="a" style="left:761px;top:366px;width:231.5px;height:19.5px;background:#fff;border:1px solid #c4c4c8;border-bottom:1.5px solid #8a8a8e;border-radius:3px"></div>
<span class="t" style="transform:scaleX(0.892);transform-origin:0 0;left:767px;top:369px;color:#1e1e1e;font-size:10.5px">General</span>
<div class="a" style="left:997px;top:327.5px;width:20.5px;height:17px;background:#fdfdfd;border:1px solid #d6d6da;border-bottom-color:#c0c0c4;border-radius:3px"></div>
<div class="a" style="left:997px;top:367.5px;width:20.5px;height:17px;background:#fdfdfd;border:1px solid #d6d6da;border-bottom-color:#c0c0c4;border-radius:3px"></div>
<span class="t" style="left:1003px;top:329px;color:#222;font-size:11px">x</span>
<span class="t" style="left:1003px;top:369px;color:#222;font-size:11px">x</span>
<span class="t" style="transform:scaleX(0.938);transform-origin:0 0;left:764px;top:417px;color:#1e1e1e;font-size:10.5px">No.</span>
<span class="t" style="transform:scaleX(0.893);transform-origin:0 0;left:836px;top:417px;color:#1e1e1e;font-size:10.5px">Name</span>
<div class="a" style="left:762.5px;top:433px;width:67px;height:18.5px;background:#fff;border:1px solid #e0e0e4;border-bottom:1.5px solid #8a8a8e;border-radius:3px"></div>
<span class="t" style="left:767px;top:435px;color:#1e1e1e;font-size:10.5px">2</span>
<div class="a" style="left:834px;top:432px;width:185.5px;height:20px;background:#fff;border:1px solid #2d72c4;border-bottom:1.6px solid #2468bc;border-radius:3px"></div>
<span class="t" style="transform:scaleX(0.952);transform-origin:0 0;left:839px;top:435px;color:#1e1e1e;font-size:10.5px">Basement A1</span>
<div class="a" style="left:898px;top:436px;width:1px;height:12px;background:#222"></div>
<span class="t" style="transform:scaleX(0.961);transform-origin:0 0;left:764px;top:458px;color:#1e1e1e;font-size:10.5px">Room type</span>
<div class="a" style="left:762.5px;top:473px;width:257px;height:19.5px;background:#fff;border:1px solid #dcdce0;border-bottom:1.5px solid #8a8a8e;border-radius:3px"></div>
<span class="t" style="transform:scaleX(0.966);transform-origin:0 0;left:764.5px;top:476px;color:#1e1e1e;font-size:10.5px">W: Unheated adjoining-room</span>
<svg style="left:978px;top:333px" width="42" height="154"><g stroke="#555" stroke-width="1" fill="none"><path d="M2 2l4 4 4-4M2 42l4 4 4-4M29 108l4 4 4-4M29 149l4 4 4-4"/></g></svg>
<span class="t" style="transform:scaleX(0.946);transform-origin:0 0;left:764px;top:500px;color:#1e1e1e;font-size:10.5px">Heating or cooling</span>
<div class="a" style="left:763.5px;top:516px;width:31.5px;height:17px;background:#fff;border:1px solid #e4e4e8;border-bottom:1.5px solid #9a9a9e;border-radius:3px"></div>
<div class="a" style="left:801px;top:516px;width:32px;height:17px;background:#fff;border:1px solid #e4e4e8;border-bottom:1.5px solid #9a9a9e;border-radius:3px"></div>
<span class="t" style="left:767px;top:517px;color:#1e1e1e;font-size:10.5px">10</span>
<span class="t" style="left:805px;top:517px;color:#1e1e1e;font-size:10.5px">24</span>
<!-- checkboxes -->
<div class="a" style="left:760px;top:571px;width:12px;height:12px;background:#f6f6f8;border:1px solid #6e6e72;border-radius:3px"></div>
<div class="a" style="left:760px;top:593px;width:12px;height:12px;background:#f6f6f8;border:1px solid #6e6e72;border-radius:3px"></div>
<span class="t" style="transform:scaleX(0.961);transform-origin:0 0;left:774px;top:570px;color:#1e1e1e;font-size:10.5px">Deviating room height</span>
<div class="a" style="left:960px;top:569px;width:39.5px;height:16px;background:#f5f5f7;border:1px solid #e6e6ea;border-radius:3px"></div>
<span class="t" style="left:964px;top:570px;color:#9a9a9e;font-size:10.5px">0</span>
<span class="t" style="transform:scaleX(0.850);transform-origin:0 0;left:1003px;top:570px;color:#1e1e1e;font-size:10.5px">mm</span>
<span class="t" style="transform:scaleX(0.957);transform-origin:0 0;left:774px;top:591px;color:#1e1e1e;font-size:10.5px">Do not consider this room for calculation of heat or</span>
<span class="t" style="transform:scaleX(0.949);transform-origin:0 0;left:774px;top:603px;color:#1e1e1e;font-size:10.5px">cooling load, because it is already considered within</span>
<span class="t" style="transform:scaleX(1.006);transform-origin:0 0;left:774px;top:615.5px;color:#1e1e1e;font-size:10.5px">another storey (e.g. stairway).</span>
<div class="a" style="left:763px;top:671.5px;width:228.5px;height:17.5px;background:#eaeaed;border-bottom:1.5px solid #9a9a9e;border-radius:3px"></div>
<span class="t" style="transform:scaleX(0.910);transform-origin:0 0;left:767.5px;top:673px;color:#1e1e1e;font-size:10.5px">GMRoomLabel.dwg</span>
<div class="a" style="left:996.5px;top:672.5px;width:21.5px;height:16.5px;background:#fdfdfd;border:1px solid #d6d6da;border-radius:3px"></div>
<span class="t" style="left:1001px;top:674px;color:#222;font-size:10.5px">...</span>
<!-- buttons -->
<div class="a" style="left:888px;top:706px;width:67px;height:19px;background:#fdfdfd;border:1.5px solid #2a6ebf;border-radius:3px"></div>
<div class="a" style="left:961px;top:706.5px;width:66px;height:18.5px;background:#fdfdfd;border:1px solid #d2d2d6;border-radius:3px"></div>
<span class="t" style="transform:scaleX(0.887);transform-origin:0 0;left:914.5px;top:709px;color:#1e1e1e;font-size:10.5px">OK</span>
<span class="t" style="transform:scaleX(0.909);transform-origin:0 0;left:978px;top:709px;color:#1e1e1e;font-size:10.5px">Cancel</span>
<!-- click ripple & cursor -->
<svg style="left:850px;top:392px" width="100" height="100">
<circle cx="45.7" cy="45.5" r="40" fill="rgba(255,255,255,0.25)" stroke="rgba(110,185,185,0.25)" stroke-width="2.2"/>
<circle cx="63" cy="53" r="18.8" fill="none" stroke="rgba(40,160,150,0.7)" stroke-width="2.4"/>
<path d="M59.5 46.5h10M59.5 62h10M64.5 46.5v15.5" stroke="#2a2a2a" stroke-width="2.4"/>
</svg>

<!-- right panel -->
<div class="a" style="left:1558px;top:160px;width:222px;height:790px;background:#4a5064"></div>
<div class="a" style="left:1558px;top:160px;width:222px;height:6px;background:#3a4050"></div>
<div class="a" style="left:1558px;top:166px;width:222px;height:59px;background:#232833"></div>
<svg style="left:1566px;top:172px" width="14" height="15"><path d="M1 4l5-3 7 2v11l-3 1V5L6 4v10l-5-1z" fill="#b9bcc4"/><path d="M6 4v10" stroke="#6f7480" stroke-width="1"/></svg>
<span class="t" style="transform:scaleX(0.930);transform-origin:0 0;left:1584.6px;top:173px;color:#eceef1;font-size:12px">Architecture, 3D Model planning</span>
<div class="a" style="left:1602px;top:194px;width:44px;height:31px;background:#4a5064"></div>
<div class="a" style="left:1602px;top:194px;width:44px;height:2px;background:#e8eaee"></div>
<svg style="left:1568px;top:198px" width="205" height="26">
<g fill="#f2f3f5"><rect x="2" y="5" width="21" height="2.2"/><rect x="2" y="11.5" width="21" height="2.2"/><rect x="2" y="18.5" width="21" height="2.2"/></g>
<g stroke="#f2f3f5" stroke-width="1.4" fill="none">
<path d="M56 5h-10.5v18h18V12"/><path d="M49 20l2-5 12-12 3 3-12 12z"/>
<rect x="90.5" y="1.5" width="17" height="22" rx="1"/>
<path d="M134.5 1.5h10l5 5v17h-15z"/>
<path d="M177.5 6V1.5h5M195.5 1.5h5V6M177.5 18.5v5h5M195.5 23.5h5v-5"/>
</g>
<g fill="#f2f3f5"><rect x="93" y="4" width="12" height="4"/><rect x="93" y="11" width="3" height="3"/><rect x="97.5" y="11" width="3" height="3"/><rect x="102" y="11" width="3" height="3"/><rect x="93" y="17" width="3" height="3"/><rect x="97.5" y="17" width="3" height="3"/><rect x="102" y="17" width="3" height="3"/>
<path d="M144.5 1.5v5h5z"/><circle cx="183" cy="12" r="2"/><circle cx="189" cy="12" r="2"/><circle cx="195" cy="12" r="2"/><path d="M49 20l-1 3 3-1z"/></g>
</svg>
<span class="t" style="transform:scaleX(0.973);transform-origin:0 0;left:1568.7px;top:231px;color:#e6e8ec;font-size:11.5px">Room contours, Building contours</span>
<div class="a" style="left:1652px;top:248px;width:28px;height:26px;background:#343a48"></div>
<div class="a" style="left:1652px;top:248px;width:28px;height:2px;background:#e8eaee"></div>
<svg style="left:1572px;top:252px" width="135" height="20">
<g stroke="#e8eaee" stroke-width="1.1" fill="none"><path d="M3 8l7-5 7 5v10H3z"/><path d="M3 11h14M3 14h14M7 3v16M13 3v16"/></g>
<path d="M3 11h14" stroke="#5ea8e0" stroke-width="1.5"/>
<path d="M31 5l3-3 10 3v10l-3 2-10-3z" fill="#e4e6ea"/><path d="M34 2v13" stroke="#b0b4bc"/>
<rect x="59.5" y="2.5" width="13" height="12" fill="none" stroke="#e8eaee" stroke-width="1.3"/><path d="M66 2.5v12M59.5 8.5h13M58 17h16" stroke="#e8eaee" stroke-width="1.3"/>
<g stroke="#f2f3f5" stroke-width="1.3" fill="none"><path d="M88 17V3h14v7h-7v7"/></g>
<g fill="#f2f3f5"><circle cx="88" cy="3" r="1.8"/><circle cx="102" cy="3" r="1.8"/><circle cx="102" cy="10" r="1.8"/><circle cx="95" cy="10" r="1.8"/><circle cx="88" cy="17" r="1.8"/><circle cx="95" cy="17" r="1.8"/></g>
<path d="M115 10l8-7h7l-8 7zM115 17l8-7h7l-8 7z" fill="#d8dade"/>
</svg>
<!-- storeys panel -->
<div class="a" style="left:1569px;top:274px;width:200px;height:105px;background:#343a48"></div>
<div class="a" style="left:1574.5px;top:296px;width:187.5px;height:82.5px;background:#3c4252"></div>
<svg style="left:1574px;top:278px" width="17" height="17"><path d="M1.5 5.5L8.5 1.5l7 4v10h-14z" fill="#eef0f2" stroke="#eef0f2"/><rect x="3" y="6.5" width="11" height="2.5" fill="#5fb0e8"/><rect x="3" y="10" width="11" height="2.5" fill="#5fb0e8"/><rect x="3" y="13" width="11" height="1.8" fill="#5fb0e8"/></svg>
<span class="t" style="transform:scaleX(0.818);transform-origin:0 0;left:1593.8px;top:280px;color:#eef0f2;font-size:11.5px;font-weight:bold">Storeys ...</span>
<svg style="left:1753px;top:284px" width="8" height="5"><path d="M0 4.5h8L4 0z" fill="#eef0f2"/></svg>
<div class="a" style="left:1591px;top:299.5px;width:171px;height:15.5px;background:#515a70"></div>
<svg style="left:1576px;top:298px" width="14" height="48">
<circle cx="5.5" cy="5.5" r="4.8" fill="#e8e070" stroke="#c8c890" stroke-width="1"/><rect x="3.5" y="10" width="4" height="4" fill="#7ad0e0"/>
<path d="M1.5 26.5a4.5 4.5 0 0 1 8 -3" stroke="#9ea4b0" fill="none"/><rect x="3.5" y="28" width="4" height="3.5" fill="#7ad0e0"/><rect x="6" y="22" width="7" height="6" fill="#d8c840"/><path d="M7.5 22v-2a2 2 0 0 1 4 0v2" stroke="#d8c840" fill="none"/>
<path d="M1.5 42.5a4.5 4.5 0 0 1 8 -3" stroke="#9ea4b0" fill="none"/><rect x="3.5" y="44" width="4" height="3.5" fill="#7ad0e0"/><rect x="6" y="38" width="7" height="6" fill="#d8c840"/><path d="M7.5 38v-2a2 2 0 0 1 4 0v2" stroke="#d8c840" fill="none"/>
</svg>
<span class="t" style="transform:scaleX(0.884);transform-origin:0 0;left:1592.7px;top:300px;color:#f2f3f5;font-size:11px">Basement</span>
<span class="t" style="transform:scaleX(0.895);transform-origin:0 0;left:1593.4px;top:316px;color:#7b808c;font-size:11px">Ground floor</span>
<span class="t" style="transform:scaleX(0.915);transform-origin:0 0;left:1593.4px;top:332px;color:#7b808c;font-size:11px">Upper floor</span>
<!-- command list -->
<div class="a" style="left:1569px;top:379.5px;width:200px;height:563.5px;background:#343a48"></div>
<div class="a" style="left:1571px;top:426.5px;width:196px;height:1.5px;background:#4c5368"></div>
<div class="a" style="left:1571px;top:566.5px;width:196px;height:1.5px;background:#4c5368"></div>
<div class="a" style="left:1571px;top:638px;width:196px;height:1.5px;background:#4c5368"></div>
<div class="a" style="left:1571px;top:666.5px;width:196px;height:1.5px;background:#4c5368"></div>

<svg style="left:1575px;top:384.1px" width="16" height="16"><rect x="0" y="2" width="5" height="9" rx="2" fill="#5aa0e0"/><path d="M5 2h6l3 3v6H5z" fill="#eef0f2"/><path d="M6 9h9l-2 6H4z" fill="#f0b040"/></svg>
<span class="t" style="transform:scaleX(0.957);transform-origin:0 0;left:1593.6px;top:384.6px;color:#eceef1;font-size:11px;-webkit-text-stroke:0.25px #eceef1">Load underlay ...&gt;</span>
<svg style="left:1575px;top:406.6px" width="16" height="16"><rect x="0" y="2" width="5" height="9" rx="2" fill="#5aa0e0"/><path d="M5 2h6l3 3v9H5z" fill="#eef0f2"/><path d="M9 12h5v3" stroke="#5aa0e0" fill="none" stroke-width="1.2"/></svg>
<span class="t" style="transform:scaleX(0.991);transform-origin:0 0;left:1593.6px;top:407.1px;color:#eceef1;font-size:11px;-webkit-text-stroke:0.25px #eceef1">Align underlay &lt;</span>
<svg style="left:1575px;top:434.3px" width="16" height="16"><path d="M0 0h7v7h8v8H0z" fill="#e4f0fa"/><path d="M0 0h7v7h8v8H0z" fill="none" stroke="#7ec0f0"/><path d="M5 1v13" stroke="#b0b8c4" stroke-dasharray="1 1"/></svg>
<span class="t" style="transform:scaleX(0.986);transform-origin:0 0;left:1593.6px;top:434.8px;color:#eceef1;font-size:11px;-webkit-text-stroke:0.25px #eceef1">Enter storey outline &lt;</span>
<svg style="left:1575px;top:456.6px" width="16" height="16"><path d="M0 0h9v6h6v9H0z" fill="#e4f0fa"/><circle cx="11" cy="11" r="3.5" fill="#c8ccd4" stroke="#707680"/></svg>
<span class="t" style="transform:scaleX(0.971);transform-origin:0 0;left:1593.6px;top:457.1px;color:#eceef1;font-size:11px;-webkit-text-stroke:0.25px #eceef1">Search room contour &lt;</span>
<svg style="left:1575px;top:478.7px" width="16" height="16"><path d="M0 0h9v6h6v9H0z" fill="#e4f0fa" stroke="#7ec0f0"/><path d="M0 10h15" stroke="#b0b8c4"/></svg>
<span class="t" style="transform:scaleX(0.986);transform-origin:0 0;left:1593.6px;top:479.2px;color:#eceef1;font-size:11px;-webkit-text-stroke:0.25px #eceef1">Enter room contour &lt;</span>
<svg style="left:1575px;top:501.2px" width="16" height="16"><rect x="0.5" y="0.5" width="14" height="14" fill="#e4f0fa" stroke="#7ec0f0"/></svg>
<span class="t" style="transform:scaleX(0.971);transform-origin:0 0;left:1593.6px;top:501.7px;color:#eceef1;font-size:11px;-webkit-text-stroke:0.25px #eceef1">Enter room rectangle &lt;</span>
<svg style="left:1575px;top:523.6px" width="16" height="16"><path d="M0 3l3 3M3 3L0 6M12 3l3 3M15 3l-3 3M0 9l3 3M3 9l-3 3M12 9l3 3M15 9l-3 3" stroke="#eef0f2"/><path d="M7.5 0v15" stroke="#5aa0e0" stroke-width="2"/></svg>
<span class="t" style="transform:scaleX(0.960);transform-origin:0 0;left:1593.6px;top:524.1px;color:#eceef1;font-size:11px;-webkit-text-stroke:0.25px #eceef1">Enter shaft &lt;</span>
<svg style="left:1575px;top:545.7px" width="16" height="16"><path d="M0 0h15v8H8v7H0z" fill="#eef0f2"/><path d="M0 0l8 8M15 0L8 8" stroke="#b8bcc4"/></svg>
<span class="t" style="transform:scaleX(0.970);transform-origin:0 0;left:1593.6px;top:546.2px;color:#eceef1;font-size:11px;-webkit-text-stroke:0.25px #eceef1">Enter roof area &lt;</span>
<svg style="left:1575px;top:573.4px" width="16" height="16"><rect x="1" y="1" width="13" height="13" fill="none" stroke="#eef0f2" stroke-dasharray="2 1.5"/><g fill="#5aa0e0"><rect x="0" y="0" width="3" height="3"/><rect x="12" y="0" width="3" height="3"/><rect x="0" y="12" width="3" height="3"/></g><path d="M11 8v7M7.5 11.5h7" stroke="#40c060" stroke-width="2.2"/></svg>
<span class="t" style="transform:scaleX(1.011);transform-origin:0 0;left:1593.6px;top:573.9px;color:#eceef1;font-size:11px;-webkit-text-stroke:0.25px #eceef1">Add contour points &lt;</span>
<svg style="left:1575px;top:595.8px" width="16" height="16"><rect x="1" y="1" width="13" height="13" fill="none" stroke="#eef0f2" stroke-dasharray="2 1.5"/><g fill="#5aa0e0"><rect x="0" y="0" width="3" height="3"/><rect x="12" y="0" width="3" height="3"/><rect x="0" y="12" width="3" height="3"/></g><path d="M8 9l6 6M14 9l-6 6" stroke="#e84848" stroke-width="2"/></svg>
<span class="t" style="transform:scaleX(1.001);transform-origin:0 0;left:1593.6px;top:596.3px;color:#eceef1;font-size:11px;-webkit-text-stroke:0.25px #eceef1">Delete contour points &lt;</span>
<svg style="left:1575px;top:617.8px" width="16" height="16"><rect x="0" y="0" width="15" height="15" fill="#eef0f2"/><rect x="0" y="6" width="6" height="9" fill="#5aa8e8"/><rect x="8" y="7" width="7" height="7" fill="#c8ccd4"/><path d="M0 5h15M7 0v5" stroke="#9aa0aa"/></svg>
<span class="t" style="transform:scaleX(0.978);transform-origin:0 0;left:1593.6px;top:618.3px;color:#eceef1;font-size:11px;-webkit-text-stroke:0.25px #eceef1">Edit room data &lt;</span>
<svg style="left:1575px;top:646.0px" width="16" height="16"><path d="M0 3l4-3h10l1 10-4 3H1z" fill="#d8dade"/><path d="M4 0v10l-3 3" stroke="#a0a4ac" fill="none"/><path d="M11 8l-3 4h3l-2 3 5-5h-3l2-2z" fill="#f0c040"/></svg>
<span class="t" style="transform:scaleX(0.947);transform-origin:0 0;left:1593.6px;top:646.5px;color:#eceef1;font-size:11px;-webkit-text-stroke:0.25px #eceef1">Generate walls ...</span>
<svg style="left:1575px;top:673.5px" width="16" height="16"><rect x="0" y="0" width="15" height="15" fill="#d8dade"/><path d="M0 5h15M7 0v5" stroke="#9aa0aa"/><circle cx="11" cy="11" r="3.5" fill="none" stroke="#5aa0e0" stroke-width="1.5"/><path d="M13 14l2 1" stroke="#e84848" stroke-width="1.5"/></svg>
<span class="t" style="transform:scaleX(0.954);transform-origin:0 0;left:1593.6px;top:674.0px;color:#eceef1;font-size:11px;-webkit-text-stroke:0.25px #eceef1">Convert (architectural) rooms ...</span>
<svg style="left:1575px;top:696.0px" width="16" height="16"><path d="M2 1v13h13M2 14L13 3M2 1l-2 3M2 1l2 3M15 14l-3-2M15 14l-3 2M13 3l-4 0M13 3v4" stroke="#eef0f2" stroke-width="1.3" fill="none"/></svg>
<span class="t" style="transform:scaleX(0.930);transform-origin:0 0;left:1593.6px;top:696.5px;color:#eceef1;font-size:11px;-webkit-text-stroke:0.25px #eceef1">Align UCS &lt;</span>

<!-- drawing frame borders -->
<div class="a" style="left:335px;top:916px;width:1223px;height:3px;background:#2d323e"></div>
<div class="a" style="left:335px;top:160px;width:2px;height:759px;background:#2d323e"></div>
<div class="a" style="left:0px;top:160px;width:1780px;height:4px;background:#3a4050"></div>
<!-- command line -->
<div class="a" style="left:337px;top:919px;width:23px;height:31px;background:#2d323e"></div>
<div class="a" style="left:360px;top:919px;width:1197px;height:31px;background:#cdcbcf;overflow:hidden">
<span class="t" style="left:2px;top:5.5px;color:#1c1c1c;font-family:'Liberation Mono',monospace;font-size:10.8px;line-height:13.8px;white-space:pre">Show a corner point of the rectangle or [Polyline]:
 show opposite corner point of rectangle:</span>
</div>
<svg style="left:340px;top:923px" width="17" height="20"><g fill="#d8dade"><rect x="0" y="0" width="2" height="2"/><rect x="3" y="0" width="2" height="2"/><rect x="6" y="0" width="2" height="2"/><rect x="9" y="0" width="2" height="2"/><rect x="12" y="0" width="2" height="2"/><rect x="15" y="0" width="2" height="2"/><rect x="0" y="3" width="2" height="2"/><rect x="3" y="3" width="2" height="2"/><rect x="6" y="3" width="2" height="2"/><rect x="9" y="3" width="2" height="2"/><rect x="12" y="3" width="2" height="2"/><rect x="15" y="3" width="2" height="2"/></g><path d="M3 11l8 8M11 11l-8 8" stroke="#eceef1" stroke-width="1.8"/></svg>
<!-- right panel bottom -->
<div class="a" style="left:1557px;top:943px;width:223px;height:7px;background:#4a5064"></div>
<!-- video player -->
<div class="a" style="left:0;top:950px;width:1780px;height:50px;background:#ffffff"></div>
<svg style="left:0;top:950px" width="1780" height="50">
<circle cx="26" cy="26" r="21.3" fill="#163c46"/>
<path d="M18 14.5v22l20-11z" fill="#ffffff"/>
<rect x="143" y="24.2" width="932" height="3.2" fill="#1e4550"/>
<rect x="1075" y="24.2" width="432.5" height="3.2" fill="#dcdcdc"/>
<circle cx="1075.4" cy="26" r="6.8" fill="#0a0a0a"/>
<g transform="translate(1618.4 25.5)" fill="none" stroke="#333" stroke-width="1.5">
<path d="M-1.8 -9.5h3.6l.6 2.6 2.4 1 2.3-1.4 2.5 2.5-1.4 2.3 1 2.4 2.6.6v3.6l-2.6.6-1 2.4 1.4 2.3-2.5 2.5-2.3-1.4-2.4 1-.6 2.6h-3.6l-.6-2.6-2.4-1-2.3 1.4-2.5-2.5 1.4-2.3-1-2.4-2.6-.6v-3.6l2.6-.6 1-2.4-1.4-2.3 2.5-2.5 2.3 1.4 2.4-1z"/>
<circle cx="0" cy="0" r="3.2"/>
</g>
<g fill="none" stroke="#333" stroke-width="1.3"><path d="M1652 19v13l6-6.5zM1661 19v13l7-6.5zM1669 18v15l11-7.5z"/></g>
<g fill="none" stroke="#333" stroke-width="1.3"><path d="M1701 22h5l6-5v17l-6-5h-5z"/></g>
<path d="M1700 17l22 19M1722 17l-22 19" stroke="#f06a6a" stroke-width="1.5"/>
<g fill="none" stroke="#333" stroke-width="1.4"><path d="M1767 16l-8 8M1759 18v6h6M1749 35l8-8M1751 27h6v6"/></g>
</svg>
<span class="t" style="transform:scaleX(0.911);transform-origin:0 0;left:65.8px;top:968.5px;color:#202020;font-size:10.5px">03:45 / 05:30</span>

</div>
</body></html>
